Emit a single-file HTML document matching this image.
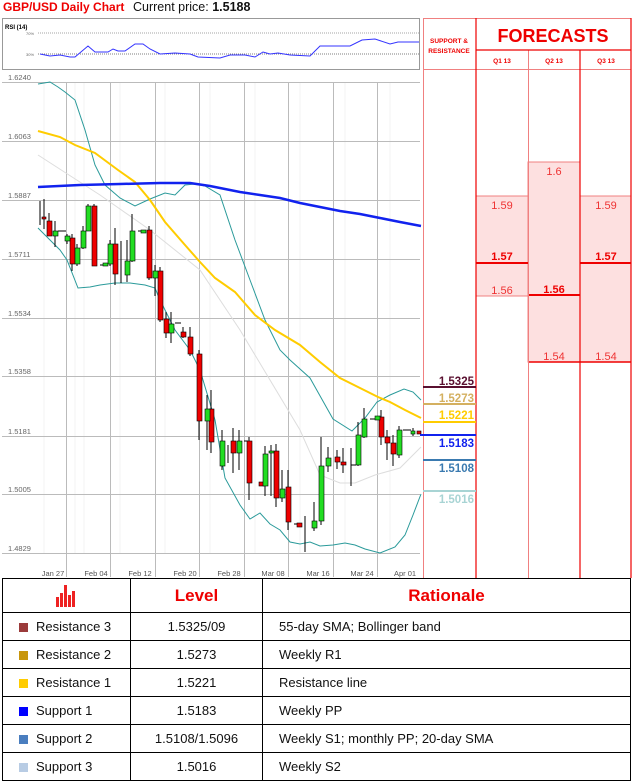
<!DOCTYPE html>
<html><head><meta charset="utf-8"><style>
*{margin:0;padding:0;box-sizing:border-box}
body{width:633px;height:782px;background:#fff;position:relative;overflow:hidden;font-family:"Liberation Sans",sans-serif}
.a{position:absolute}
table{border-collapse:collapse;position:absolute;left:2px;top:578px;width:629px}
td{border:1.5px solid #000;font-size:13px;color:#111;height:28px}
td.c{text-align:center}
.sq{display:inline-block;width:9px;height:9px;margin:0 8px 0 16px;vertical-align:-1px}
</style></head><body>
<div class="a" style="left:3px;top:0;font-size:12px;font-weight:bold;color:#e00;">GBP/USD Daily Chart</div>
<div class="a" style="left:133px;top:0;font-size:12.5px;color:#111;">Current price: <b>1.5188</b></div>

<svg class="a" style="left:0;top:0" width="633" height="580" font-family="Liberation Sans, sans-serif">
<rect x="2.5" y="18.5" width="417" height="51" fill="#fff" stroke="#999"/>
<text x="5" y="29" font-size="6" font-weight="bold" fill="#000">RSI (14)</text>
<text x="26" y="35" font-size="4" fill="#666">70%</text>
<text x="26" y="56" font-size="4" fill="#666">30%</text>
<line x1="38" y1="33" x2="419" y2="33" stroke="#888" stroke-dasharray="1,1" stroke-width=".7"/>
<line x1="38" y1="54" x2="419" y2="54" stroke="#555" stroke-dasharray="1,1" stroke-width=".7"/>
<polyline fill="none" stroke="#33f" stroke-width="1" points="40,54 50,56 60,55 70,57 75,57 88,46 95,52 108,52 113,49 118,51 125,51 135,44 143,44 150,49 160,54 175,53 190,54 198,57 220,58 230,55 245,55 255,57 263,52 270,54 278,53 290,55 310,56 320,46 350,46 362,40 375,39 390,44 398,42 419,42"/>

<rect x="2" y="76" width="418" height="500" fill="#fff"/>
<g stroke="#f3f3f3" stroke-width="1">
<line x1="75" y1="82" x2="75" y2="553"/><line x1="84" y1="82" x2="84" y2="553"/><line x1="120" y1="82" x2="120" y2="553"/><line x1="165" y1="82" x2="165" y2="553"/><line x1="210" y1="82" x2="210" y2="553"/><line x1="255" y1="82" x2="255" y2="553"/><line x1="300" y1="82" x2="300" y2="553"/><line x1="345" y1="82" x2="345" y2="553"/><line x1="390" y1="82" x2="390" y2="553"/><line x1="44" y1="82" x2="44" y2="553"/>
</g>
<g stroke="#bbb" stroke-width="1">
<line x1="66.5" y1="82" x2="66.5" y2="577"/><line x1="110.5" y1="82" x2="110.5" y2="577"/><line x1="155.5" y1="82" x2="155.5" y2="577"/><line x1="199.5" y1="82" x2="199.5" y2="577"/><line x1="244.5" y1="82" x2="244.5" y2="577"/><line x1="288.5" y1="82" x2="288.5" y2="577"/><line x1="333.5" y1="82" x2="333.5" y2="577"/><line x1="377.5" y1="82" x2="377.5" y2="577"/>
<line x1="2" y1="82.5" x2="420" y2="82.5"/><line x1="2" y1="141.5" x2="420" y2="141.5"/><line x1="2" y1="200.5" x2="420" y2="200.5"/><line x1="2" y1="259.5" x2="420" y2="259.5"/><line x1="2" y1="318.5" x2="420" y2="318.5"/><line x1="2" y1="376.5" x2="420" y2="376.5"/><line x1="2" y1="436.5" x2="420" y2="436.5"/><line x1="2" y1="494.5" x2="420" y2="494.5"/><line x1="2" y1="553.5" x2="420" y2="553.5"/>
</g>
<g font-size="7.5" fill="#666">
<text x="8" y="80">1.6240</text><text x="8" y="139">1.6063</text><text x="8" y="198">1.5887</text><text x="8" y="257">1.5711</text><text x="8" y="316">1.5534</text><text x="8" y="374">1.5358</text><text x="8" y="434">1.5181</text><text x="8" y="492">1.5005</text><text x="8" y="551">1.4829</text>
</g>
<g font-size="7.5" fill="#555" text-anchor="middle">
<text x="53" y="576">Jan 27</text><text x="96" y="576">Feb 04</text><text x="140" y="576">Feb 12</text><text x="185" y="576">Feb 20</text><text x="229" y="576">Feb 28</text><text x="273" y="576">Mar 08</text><text x="318" y="576">Mar 16</text><text x="362" y="576">Mar 24</text><text x="405" y="576">Apr 01</text>
</g>

<polyline fill="none" stroke="#ddd" stroke-width="1" points="38,155 100,195 150,230 200,270 240,330 270,380 300,430 320,475 340,483 355,483 375,475 400,468 421,447"/>
<polyline fill="none" stroke="#2a9a9a" stroke-width="1" points="38,84 50,82 58,87 65,92 75,100 85,130 95,165 105,185 120,198 135,206 150,199 165,193 175,195 185,185 195,184 205,186 220,195 235,240 250,280 265,320 280,350 290,360 310,378 333,419 352,431 365,418 377,402 390,395 404,389 413,392 421,400"/>
<polyline fill="none" stroke="#2a9a9a" stroke-width="1" points="38,228 50,240 60,250 67,260 78,288 90,287 100,285 115,283 130,283 145,285 155,288 160,300 175,330 190,350 200,370 215,420 225,478 240,505 250,519 260,513 270,524 280,530 290,542 300,544 310,542 320,546 333,545 345,543 355,545 365,549 380,553 395,547 405,535 413,515 421,494"/>
<polyline fill="none" stroke="#fc0" stroke-width="2" points="38,131 60,137 75,145 95,153 118,170 135,182 150,200 165,222 185,245 200,262 215,278 235,292 255,315 275,330 300,345 320,362 340,378 360,388 378,397 390,402 405,410 421,418"/>
<polyline fill="none" stroke="#12e" stroke-width="2.5" points="38,187 80,185 120,184 160,183 190,183 210,186 240,192 260,195 280,198 300,203 320,207 340,211 360,214 380,218 400,222 421,226"/>

<g stroke="#000" stroke-width="1">
<line x1="40" y1="201" x2="40" y2="225"/><line x1="44" y1="199" x2="44" y2="229"/><line x1="49" y1="213" x2="49" y2="236"/><line x1="55" y1="221" x2="55" y2="247"/><line x1="67" y1="234" x2="67" y2="244"/><line x1="72" y1="234" x2="72" y2="271"/><line x1="77" y1="244" x2="77" y2="266"/><line x1="83" y1="226" x2="83" y2="249"/><line x1="88" y1="204" x2="88" y2="231"/><line x1="94" y1="204" x2="94" y2="266"/><line x1="110" y1="240" x2="110" y2="266"/><line x1="115" y1="228" x2="115" y2="285"/><line x1="121" y1="241" x2="121" y2="283"/><line x1="127" y1="240" x2="127" y2="282"/><line x1="132" y1="214" x2="132" y2="262"/><line x1="149" y1="226" x2="149" y2="280"/><line x1="155" y1="265" x2="155" y2="296"/><line x1="160" y1="267" x2="160" y2="322"/><line x1="166" y1="312" x2="166" y2="338"/><line x1="171" y1="312" x2="171" y2="343"/><line x1="183" y1="327" x2="183" y2="338"/><line x1="190" y1="327" x2="190" y2="356"/><line x1="199" y1="350" x2="199" y2="440"/><line x1="207" y1="395" x2="207" y2="450"/><line x1="211" y1="390" x2="211" y2="453"/><line x1="222" y1="430" x2="222" y2="470"/><line x1="228" y1="445" x2="228" y2="463"/><line x1="233" y1="428" x2="233" y2="473"/><line x1="239" y1="430" x2="239" y2="470"/><line x1="249" y1="437" x2="249" y2="500"/><line x1="265" y1="446" x2="265" y2="496"/><line x1="271" y1="445" x2="271" y2="496"/><line x1="276" y1="444" x2="276" y2="507"/><line x1="282" y1="470" x2="282" y2="502"/><line x1="288" y1="470" x2="288" y2="530"/><line x1="305" y1="516" x2="305" y2="552"/><line x1="314" y1="502" x2="314" y2="531"/><line x1="321" y1="437" x2="321" y2="525"/><line x1="328" y1="447" x2="328" y2="472"/><line x1="337" y1="450" x2="337" y2="469"/><line x1="343" y1="448" x2="343" y2="473"/><line x1="351" y1="448" x2="351" y2="486"/><line x1="358" y1="422" x2="358" y2="466"/><line x1="364" y1="408" x2="364" y2="438"/><line x1="381" y1="410" x2="381" y2="445"/><line x1="387" y1="430" x2="387" y2="460"/><line x1="393" y1="435" x2="393" y2="466"/><line x1="399" y1="426" x2="399" y2="458"/><line x1="413" y1="428" x2="413" y2="436"/>
<line x1="58" y1="231" x2="66" y2="231"/><line x1="100" y1="265" x2="108" y2="265"/><line x1="138" y1="231" x2="146" y2="231"/><line x1="175" y1="323" x2="181" y2="323"/><line x1="244" y1="441" x2="248" y2="441"/><line x1="294" y1="524" x2="300" y2="524"/><line x1="351" y1="465" x2="356" y2="465"/><line x1="370" y1="419" x2="376" y2="419"/><line x1="403" y1="430" x2="411" y2="430"/>
</g>
<g fill="#e00" stroke="#000" stroke-width=".6">
<rect x="42" y="217" width="4" height="2"/><rect x="47" y="221" width="5" height="15"/><rect x="70" y="238" width="5" height="26"/><rect x="92" y="206" width="5" height="60"/><rect x="113" y="244" width="5" height="30"/><rect x="147" y="230" width="5" height="48"/><rect x="158" y="271" width="5" height="49"/><rect x="164" y="319" width="5" height="14"/><rect x="181" y="332" width="5" height="5"/><rect x="188" y="337" width="5" height="17"/><rect x="197" y="354" width="5" height="67"/><rect x="209" y="409" width="5" height="33"/><rect x="231" y="441" width="5" height="12"/><rect x="247" y="441" width="5" height="42"/><rect x="259" y="482" width="5" height="4"/><rect x="274" y="451" width="5" height="47"/><rect x="286" y="487" width="5" height="35"/><rect x="297" y="523" width="5" height="4"/><rect x="335" y="457" width="5" height="5"/><rect x="341" y="462" width="5" height="3"/><rect x="379" y="417" width="5" height="20"/><rect x="385" y="437" width="5" height="6"/><rect x="391" y="443" width="5" height="11"/><rect x="417" y="431" width="4" height="3"/>
</g>
<g fill="#2d2" stroke="#000" stroke-width=".6">
<rect x="53" y="231" width="5" height="5"/><rect x="65" y="236" width="5" height="5"/><rect x="75" y="248" width="5" height="16"/><rect x="81" y="231" width="5" height="17"/><rect x="86" y="206" width="5" height="25"/><rect x="103" y="263" width="5" height="3"/><rect x="108" y="244" width="5" height="20"/><rect x="125" y="261" width="5" height="14"/><rect x="130" y="231" width="5" height="30"/><rect x="141" y="230" width="5" height="3"/><rect x="153" y="271" width="5" height="7"/><rect x="169" y="324" width="5" height="9"/><rect x="205" y="409" width="5" height="12"/><rect x="220" y="441" width="5" height="25"/><rect x="237" y="441" width="5" height="12"/><rect x="263" y="454" width="5" height="32"/><rect x="269" y="451" width="5" height="2"/><rect x="280" y="489" width="5" height="9"/><rect x="312" y="521" width="5" height="7"/><rect x="319" y="466" width="5" height="55"/><rect x="326" y="458" width="5" height="8"/><rect x="356" y="435" width="5" height="30"/><rect x="362" y="419" width="5" height="18"/><rect x="375" y="416" width="5" height="4"/><rect x="397" y="430" width="5" height="25"/><rect x="411" y="431" width="4" height="3"/>
</g>

<rect x="423" y="18" width="208" height="560" fill="#fff"/>
<rect x="476" y="196" width="52" height="100" fill="#fde0e0" stroke="#f08080"/>
<rect x="528" y="162" width="52" height="200" fill="#fde0e0" stroke="#f08080"/>
<rect x="580" y="196" width="51" height="166" fill="#fde0e0" stroke="#f08080"/>
<line x1="476" y1="263" x2="528" y2="263" stroke="#e00" stroke-width="2"/>
<line x1="580" y1="263" x2="631" y2="263" stroke="#e00" stroke-width="2"/>
<line x1="528" y1="295" x2="580" y2="295" stroke="#e00" stroke-width="2"/>
<line x1="528" y1="362" x2="631" y2="362" stroke="#e00" stroke-width="1.5"/>
<g font-size="11" fill="#e33" text-anchor="middle">
<text x="554" y="175">1.6</text><text x="502" y="209">1.59</text><text x="606" y="209">1.59</text><text x="502" y="294">1.56</text><text x="554" y="360">1.54</text><text x="606" y="360">1.54</text>
<text x="502" y="260" font-weight="bold" fill="#e00">1.57</text><text x="606" y="260" font-weight="bold" fill="#e00">1.57</text><text x="554" y="293" font-weight="bold" fill="#e00">1.56</text>
</g>
<g stroke="#f08080" stroke-width="1">
<line x1="423.5" y1="18" x2="423.5" y2="578"/><line x1="528.5" y1="50" x2="528.5" y2="578"/>
<line x1="423" y1="18.5" x2="631" y2="18.5"/><line x1="423" y1="69.5" x2="631" y2="69.5"/>
</g>
<g stroke="#e00" stroke-width="1.2">
<line x1="476" y1="18" x2="476" y2="578"/><line x1="580" y1="50" x2="580" y2="578"/><line x1="631" y1="18" x2="631" y2="578"/>
<line x1="476" y1="50" x2="631" y2="50"/>
</g>
<text x="449" y="43" font-size="6.5" font-weight="bold" fill="#e00" text-anchor="middle">SUPPORT &amp;</text>
<text x="449" y="53" font-size="6.5" font-weight="bold" fill="#e00" text-anchor="middle">RESISTANCE</text>
<text x="553" y="42" font-size="18" font-weight="bold" fill="#e00" text-anchor="middle">FORECASTS</text>
<g font-size="6.5" font-weight="bold" fill="#e00" text-anchor="middle"><text x="502" y="63">Q1 13</text><text x="554" y="63">Q2 13</text><text x="606" y="63">Q3 13</text></g>

<line x1="423" y1="387" x2="476" y2="387" stroke="#5a1030" stroke-width="2"/>
<line x1="423" y1="404" x2="476" y2="404" stroke="#d4b060" stroke-width="2"/>
<line x1="423" y1="422" x2="476" y2="422" stroke="#fc0" stroke-width="2"/>
<line x1="420" y1="435" x2="476" y2="435" stroke="#12e" stroke-width="2"/>
<line x1="423" y1="460" x2="476" y2="460" stroke="#3a7ab0" stroke-width="2"/>
<line x1="423" y1="491" x2="476" y2="491" stroke="#a8d4d4" stroke-width="2"/>
<g font-size="11.5" font-weight="bold" text-anchor="end">
<text x="474" y="385" fill="#5a1030">1.5325</text><text x="474" y="402" fill="#d4b060">1.5273</text><text x="474" y="419" fill="#fc0">1.5221</text><text x="474" y="447" fill="#12e">1.5183</text><text x="474" y="472" fill="#3a7ab0">1.5108</text><text x="474" y="503" fill="#a8d4d4">1.5016</text>
</g>
</svg>

<table>
<tr style="height:34px"><td style="width:128px;text-align:center"><svg width="26" height="26" viewBox="0 0 26 26"><rect x="2" y="16" width="3" height="10" fill="#e22"/><rect x="6" y="12" width="3" height="14" fill="#e22"/><rect x="10" y="4" width="3" height="22" fill="#e22"/><rect x="14" y="14" width="3" height="12" fill="#e22"/><rect x="18" y="10" width="3" height="16" fill="#e22"/></svg></td><td class="c" style="width:132px;color:#e00;font-weight:bold;font-size:17px">Level</td><td class="c" style="color:#e00;font-weight:bold;font-size:17px">Rationale</td></tr>
<tr><td><span class="sq" style="background:#9b3b3b"></span>Resistance 3</td><td class="c">1.5325/09</td><td style="padding-left:16px">55-day SMA; Bollinger band</td></tr>
<tr><td><span class="sq" style="background:#c8960c"></span>Resistance 2</td><td class="c">1.5273</td><td style="padding-left:16px">Weekly R1</td></tr>
<tr><td><span class="sq" style="background:#ffcc00"></span>Resistance 1</td><td class="c">1.5221</td><td style="padding-left:16px">Resistance line</td></tr>
<tr><td><span class="sq" style="background:#0000ff"></span>Support 1</td><td class="c">1.5183</td><td style="padding-left:16px">Weekly PP</td></tr>
<tr><td><span class="sq" style="background:#4a7ebf"></span>Support 2</td><td class="c">1.5108/1.5096</td><td style="padding-left:16px">Weekly S1; monthly PP; 20-day SMA</td></tr>
<tr><td><span class="sq" style="background:#b8cce4"></span>Support 3</td><td class="c">1.5016</td><td style="padding-left:16px">Weekly S2</td></tr>
</table>
</body></html>
